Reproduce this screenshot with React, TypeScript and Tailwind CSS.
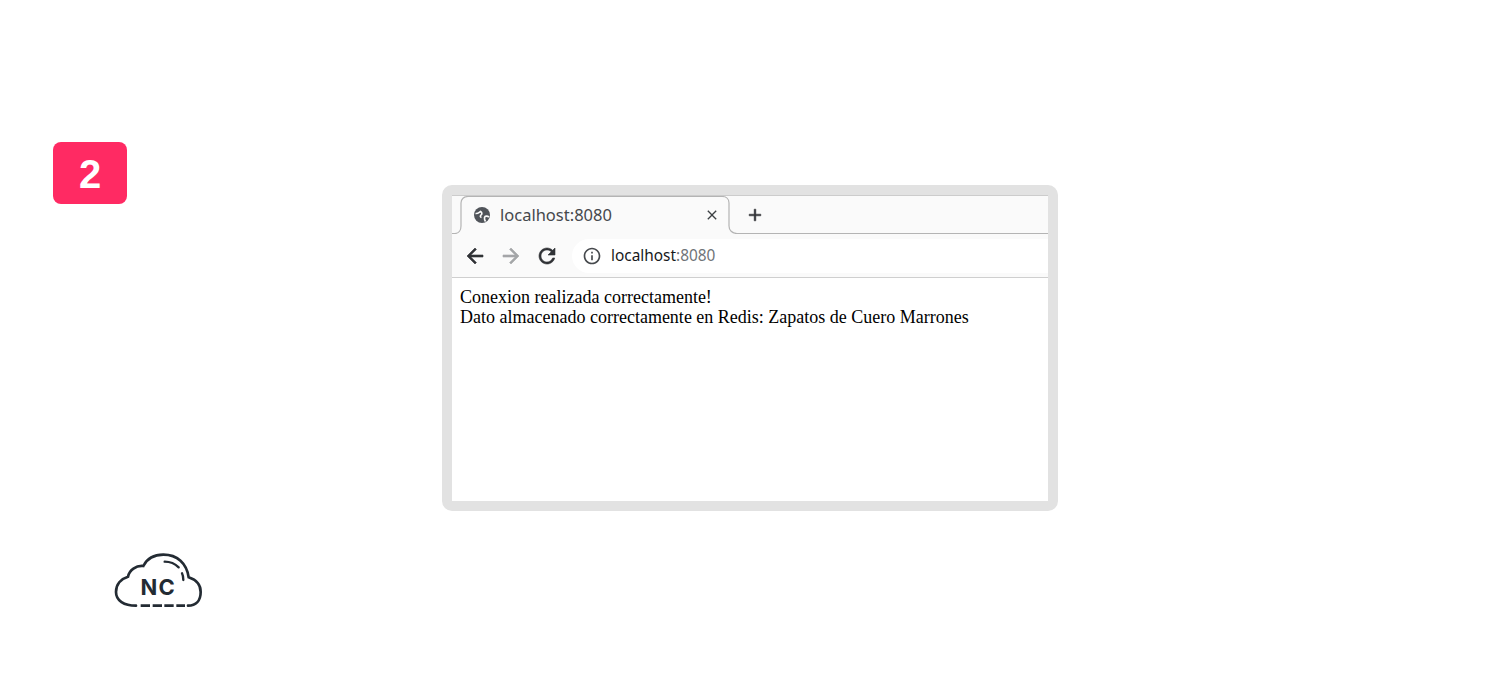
import React from 'react';

const UI_FONT = "font-['Noto_Sans','Open_Sans',sans-serif]";

// material style icons as chrome draws them
function Icon({ d, className, bold }: { d: string; className: string; bold?: boolean }) {
  return (
    <svg viewBox="0 0 24 24" className={className} fill="currentColor" stroke={bold ? 'currentColor' : 'none'} strokeWidth={bold ? 0.6 : 0}>
      <path d={d} />
    </svg>
  );
}

const ARROW_LEFT = 'M20 11H7.83l5.59-5.59L12 4l-8 8 8 8 1.41-1.41L7.83 13H20v-2z';
const ARROW_RIGHT = 'M12 4l-1.41 1.41L16.17 11H4v2h12.17l-5.58 5.59L12 20l8-8z';
const RELOAD = 'M17.65 6.35C16.2 4.9 14.21 4 12 4c-4.42 0-7.99 3.58-7.99 8s3.57 8 7.99 8c3.73 0 6.84-2.55 7.73-6h-2.08c-.82 2.33-3.04 4-5.65 4-3.31 0-6-2.69-6-6s2.69-6 6-6c1.66 0 3.14.69 4.22 1.78L13 11h7V4l-2.35 2.35z';
const INFO = 'M11 7h2v2h-2zm0 4h2v6h-2zm1-9C6.48 2 2 6.48 2 12s4.48 10 10 10 10-4.48 10-10S17.52 2 12 2zm0 18c-4.41 0-8-3.59-8-8s3.59-8 8-8 8 3.59 8 8-3.59 8-8 8z';
const CLOSE = 'M19 6.41L17.59 5 12 10.59 6.41 5 5 6.41 10.59 12 5 17.59 6.41 19 12 13.41 17.59 19 19 17.59 13.41 12z';
const PLUS = 'M19 13h-6v6h-2v-6H5v-2h6V5h2v6h6v2z';

function GlobeIcon() {
  return (
    <svg viewBox="0 0 16 16" className="relative ml-[22px] h-[16px] w-[16px]" fill="none">
      <circle cx="8" cy="8" r="8" fill="#50545a" />
      <path d="M1.500 6.500 C3.500 7 5 5.500 6.500 4.500 C8 5.500 8.500 7 7 8 C6 8.800 6 10 7.500 10.500" stroke="#fafafa" strokeWidth="1.600" />
      <path d="M15 10 C13 8.500 11 9 10.500 10.500 C10.300 12 10.800 13.500 11.500 14.500" stroke="#fafafa" strokeWidth="1.600" />
    </svg>
  );
}

function NcLogo() {
  return (
    <svg viewBox="0 0 360 240" className="ml-[100px] mt-[29px] h-[80px] w-[120px]" fill="none" stroke="#232b33" strokeWidth="8" strokeLinecap="round">
      <path d="M108 197 C72 197 48 182 48 156 C48 132 64 116 84 110 C88 90 108 76 130 78 C142 54 166 44 190 44 C232 44 260 70 266 112 C290 120 302 136 302 156 C302 182 288 197 264 197" />
      <path strokeLinecap="butt" d="M122 197 H150 M158 197 H186 M193 197 H221 M229 197 H255" />
      <path d="M194 65 C212 65 226 72 236 82" strokeWidth="7" />
      <path d="M246 100 C249 106 250 113 250 120" strokeWidth="7" />
      <text x="175" y="166" textAnchor="middle" fill="#232b33" stroke="none" fontFamily="Inter, sans-serif" fontWeight="700" fontSize="66" letterSpacing="4">NC</text>
    </svg>
  );
}

function BrowserFrame() {
  return (
    <div className="ml-[315px] mt-[43px] h-[326px] w-[616px] rounded-[10px] border-[10px] border-[#e2e2e2] bg-white">
      {/* Tab strip */}
      <div className={`relative flex h-[39px] items-center border-t border-[#cccccc] bg-[#fafafa] ${UI_FONT}`}>
        <svg viewBox="0 0 596 38" className="absolute inset-0 h-[38px] w-[596px]" fill="none" stroke="#b4b4b4" strokeWidth="1.200">
          <path d="M0 37.500 H3 C7 37.500 9 34 9 30 V7 C9 3 12 0.500 16 0.500 H270 C274 0.500 277 3 277 7 V30 C277 34 280 37.500 285 37.500 H596" />
        </svg>
        <GlobeIcon />
        <span className="relative ml-[10px] text-[16.500px] text-[#45484c]">localhost:8080</span>
        <Icon d={CLOSE} className="relative ml-[92px] h-[16px] w-[16px] text-[#3c4043]" />
        <Icon d={PLUS} className="relative ml-[25px] h-[20px] w-[20px] text-[#303236]" bold />
      </div>

      {/* Toolbar */}
      <div className={`flex h-[44px] items-center border-b border-[#cfcfcf] bg-[#fafafa] ${UI_FONT}`}>
        <Icon d={ARROW_LEFT} className="ml-[11px] h-[24px] w-[24px] text-[#303236]" bold />
        <Icon d={ARROW_RIGHT} className="ml-[12px] h-[24px] w-[24px] text-[#a4a6a8]" bold />
        <Icon d={RELOAD} className="ml-[12px] h-[24px] w-[24px] text-[#303236]" bold />
        <div className="ml-[13px] flex h-[34px] flex-1 items-center rounded-l-full bg-white">
          <Icon d={INFO} className="ml-[10px] h-[20px] w-[20px] text-[#46494d]" />
          <span className="ml-[9px] text-[15.400px] text-[#16181a]">
            localhost<span className="text-[#6f7478]">:8080</span>
          </span>
        </div>
      </div>

      {/* Page content */}
      <div className="pl-[8px] pt-[9px] font-['Liberation_Serif',serif] text-[18px] leading-[20px] text-black">
        <p>Conexion realizada correctamente!</p>
        <p>Dato almacenado correctamente en Redis: Zapatos de Cuero Marrones</p>
      </div>
    </div>
  );
}

export default function App() {
  return (
    <div className="flex h-[696px] w-[1500px] flex-col bg-white pt-[142px]">
      <div className="flex items-start pl-[53px]">
        <div className="flex h-[62px] w-[74px] items-center justify-center rounded-[8px] bg-[#ff2a63] pt-[2px] font-['Liberation_Sans',sans-serif] text-[40px] font-bold text-white">
          2
        </div>
        <BrowserFrame />
      </div>
      <NcLogo />
    </div>
  );
}
